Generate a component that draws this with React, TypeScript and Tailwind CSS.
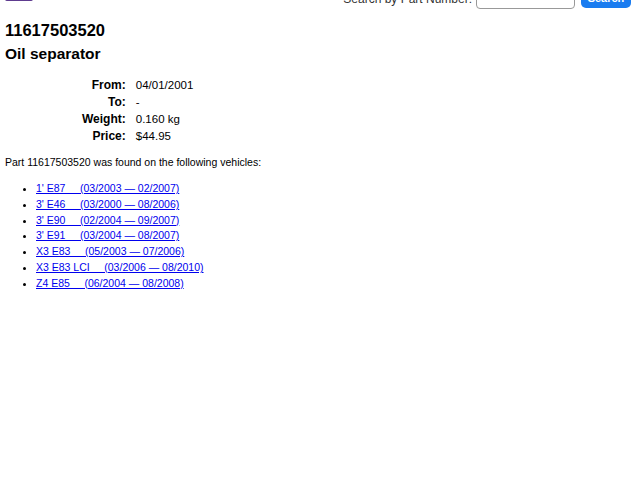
const vehicles = [
  { model: "1' E87", range: '(03/2003 — 02/2007)' },
  { model: "3' E46", range: '(03/2000 — 08/2006)' },
  { model: "3' E90", range: '(02/2004 — 09/2007)' },
  { model: "3' E91", range: '(03/2004 — 08/2007)' },
  { model: 'X3 E83', range: '(05/2003 — 07/2006)' },
  { model: 'X3 E83 LCI', range: '(03/2006 — 08/2010)' },
  { model: 'Z4 E85', range: '(06/2004 — 08/2008)' },
];

const details = [
  ['From:', '04/01/2001'],
  ['To:', '-'],
  ['Weight:', '0.160 kg'],
  ['Price:', '$44.95'],
];

export default function App() {
  return (
    <div className="min-h-[480px] overflow-hidden bg-white px-[5px] text-black font-['Liberation_Sans',Arial,sans-serif]">
      {/* page is scrolled a little, header is partly cut off */}
      <div className="mt-[-12px] flex items-end justify-between">
        <div className="mb-[8px] h-[13px] w-[28px] rounded-b-[2px] bg-[#5e3b8f]" />
        <div className="flex items-center pr-[4px]">
          <span className="text-[12px] text-[#333]">Search by Part Number:</span>
          <input
            type="text"
            className="ml-[4px] h-[21px] w-[99px] rounded-[4px] border border-[#999] bg-white"
          />
          <button className="ml-[6px] h-[19px] w-[50px] rounded-[5px] bg-[#1a7cf0] text-[11px] font-bold text-white">
            Search
          </button>
        </div>
      </div>

      <h1 className="mt-[11px] text-[16.5px] font-bold leading-[20px]">11617503520</h1>
      <h2 className="mt-[4px] text-[15.5px] font-bold leading-[20px]">Oil separator</h2>

      <table className="mt-[13px] ml-[77px] text-[11.5px] leading-[17px]">
        <tbody>
          {details.map(([label, value]) => (
            <tr key={label}>
              <td className="w-[52px] pr-[10px] text-right text-[12px] font-bold">{label}</td>
              <td>{value}</td>
            </tr>
          ))}
        </tbody>
      </table>

      <p className="mt-[10px] text-[10.5px] leading-[14px]">
        Part 11617503520 was found on the following vehicles:
      </p>

      <ul className="mt-[12px] list-disc pl-[31px] text-[10.5px] leading-[15.83px]">
        {vehicles.map((v) => (
          <li key={v.model}>
            <a href="#" className="whitespace-pre text-[#0000ee] underline">
              {v.model + '     ' + v.range}
            </a>
          </li>
        ))}
      </ul>
    </div>
  );
}
